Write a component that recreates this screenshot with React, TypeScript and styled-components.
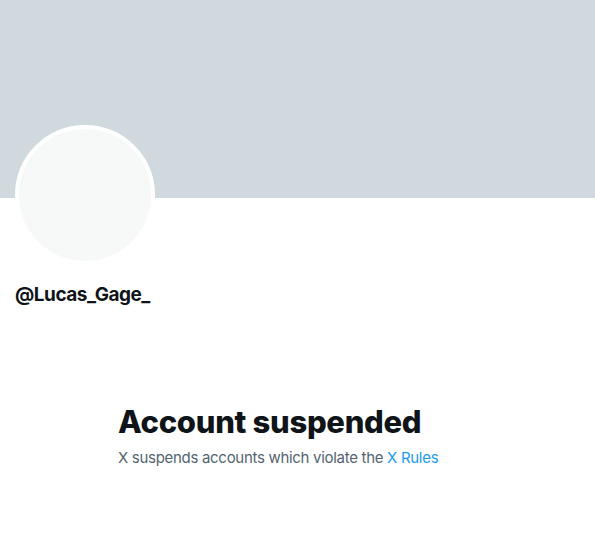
import React from 'react';
import styled, {createGlobalStyle} from 'styled-components';

const Global = createGlobalStyle`
  body {
    margin: 0;
    background: #fff;
    font-family: "Segoe UI", Inter, "Liberation Sans", sans-serif;
    color: #0f1419;
  }
`;

const Page = styled.div`
  width: 595px;
  height: 545px;
  overflow: hidden;
`;
const Banner = styled.div`
  height: 198px;
  background: #cfd9de;
`;
const Profile = styled.div`
  padding: 0 15px;
`;
const Avatar = styled.div`
  width: 132px;
  height: 132px;
  margin-top: -73px;
  border-radius: 50%;
  border: 4px solid #fff;
  background: #f7f9f9;
`;
const Handle = styled.div`
  margin-top: 18px;
  font-size: 19px;
  font-weight: 700;
  line-height: 24px;
  letter-spacing: -0.5px;
`;
const Notice = styled.div`
  padding: 97px 0 0 118px;
`;
const Title = styled.h1`
  margin: 0;
  font-size: 31px;
  line-height: 36px;
  font-weight: 800;
  letter-spacing: -0.3px;
`;
const Text = styled.p`
  margin: 8px 0 0;
  font-size: 15px;
  line-height: 20px;
  letter-spacing: -0.3px;
  color: #536471;
  > a {
    color: #1d9bf0;
    text-decoration: none;
  }
`;

export default function App() {
  return (
    <Page>
      <Global/>
      <Banner/>
      <Profile>
        <Avatar/>
        <Handle>@Lucas_Gage_</Handle>
      </Profile>
      <Notice>
        <Title>Account suspended</Title>
        <Text>X suspends accounts which violate the <a href="#">X Rules</a></Text>
      </Notice>
    </Page>
  );
}
